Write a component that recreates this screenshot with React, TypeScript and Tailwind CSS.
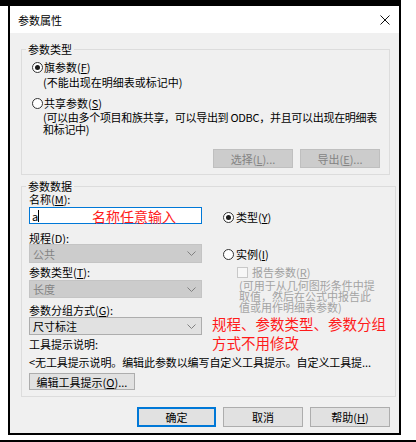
import type { ReactNode } from 'react';

const Radio = ({ checked }: { checked?: boolean }) => (
  <span className="flex h-[11px] w-[11px] shrink-0 items-center justify-center rounded-full border border-[#333333] bg-white">
    {checked && <span className="h-[5px] w-[5px] rounded-full bg-[#1a1a1a]" />}
  </span>
);

const K = ({ children }: { children: ReactNode }) => (
  <span className="underline underline-offset-[1px]">{children}</span>
);

const Chevron = () => (
  <svg width="9" height="5" viewBox="0 0 9 5" className="shrink-0">
    <path d="M0.5 0.5 L4.5 4.5 L8.5 0.5" fill="none" stroke="#808080" strokeWidth="1" />
  </svg>
);

const Select = ({ value, disabled, tall }: { value: string; disabled?: boolean; tall?: boolean }) => (
  <div
    className={`flex w-[173px] items-center justify-between border pl-[3px] pr-[5px] ${tall ? 'h-[19px]' : 'h-[18px]'} ${
      disabled ? 'border-[#c4c4c4] bg-[#cccccc] text-[#838383]' : 'border-[#adadad] bg-[#e1e1e1] text-black'
    }`}
  >
    <span>{value}</span>
    <Chevron />
  </div>
);

const Button = ({ children, className = '' }: { children: ReactNode; className?: string }) => (
  <div className={`flex items-center justify-center border ${className}`}>{children}</div>
);

const App = () => {
  return (
    <div className="h-[442px] w-[416px] overflow-hidden bg-white font-['Noto_Sans_CJK_SC','Microsoft_YaHei',sans-serif] text-[11px] leading-[12px] text-black">
      <div className="h-[6px] w-[401px] bg-black" />

      <div className="ml-[8px] flex w-[393px] flex-col border-x-2 border-b-2 border-black">
        {/* title bar */}
        <div className="flex h-[27px] items-center justify-between bg-white pl-[8px] pr-[9px]">
          <span>参数属性</span>
          <svg width="10" height="10" viewBox="0 0 10 10">
            <path d="M0.5 0.5 L9.5 9.5 M9.5 0.5 L0.5 9.5" stroke="#111" strokeWidth="1" />
          </svg>
        </div>

        <div className="flex h-[400px] flex-col bg-[#f0f0f0]">
          {/* 参数类型 */}
          <fieldset className="ml-[11px] mr-[9px] mt-[10px] border border-[#dcdcdc]">
            <legend className="ml-[4px] px-[2px] leading-[12px]">参数类型</legend>
            <div className="flex flex-col pb-[6px] pl-[10px] pr-[9px]">
              <div className="mt-[6px] flex h-[12px] items-center gap-[1px]">
                <Radio checked />
                <span>旗参数(<K>F</K>)</span>
              </div>
              <div className="mt-[3px] pl-[11px]">(不能出现在明细表或标记中)</div>
              <div className="mt-[9px] flex h-[12px] items-center gap-[1px]">
                <Radio />
                <span>共享参数(<K>S</K>)</span>
              </div>
              <div className="mt-[2px] whitespace-nowrap pl-[11px] tracking-[-0.3px]">
                (可以由多个项目和族共享，可以导出到 ODBC，并且可以出现在明细表
                <br />
                和标记中)
              </div>
              <div className="mt-[14px] flex justify-end gap-[7px]">
                <Button className="h-[19px] w-[80px] border-[#bfbfbf] bg-[#cccccc] text-[#838383]">
                  选择(<K>L</K>)...
                </Button>
                <Button className="h-[19px] w-[80px] border-[#bfbfbf] bg-[#cccccc] text-[#838383]">
                  导出(<K>E</K>)...
                </Button>
              </div>
            </div>
          </fieldset>

          {/* 参数数据 */}
          <fieldset className="ml-[11px] mr-[9px] mt-[5px] border border-[#dcdcdc]">
            <legend className="ml-[4px] px-[2px] leading-[12px]">参数数据</legend>
            <div className="flex flex-col pb-[6px] pl-[7px] pr-[9px]">
              <div className="flex">
                <div className="flex w-[173px] flex-col">
                  <div className="mt-[1px]">名称(<K>M</K>):</div>
                  <div className="relative mt-[2px] flex h-[17px] items-center border border-[#0078d7] bg-white pl-[2px]">
                    <span>a</span>
                    <span className="h-[12px] w-[1px] bg-black" />
                    <span className="absolute left-[62px] top-0 text-[14px] leading-[17px] text-[#ff1a1a]">
                      名称任意输入
                    </span>
                  </div>
                  <div className="mt-[8px]">规程(<K>D</K>):</div>
                  <Select value="公共" disabled tall />
                  <div className="mt-[3px]">参数类型(<K>T</K>):</div>
                  <div className="mt-[2px]">
                    <Select value="长度" disabled />
                  </div>
                  <div className="mt-[6px]">参数分组方式(<K>G</K>):</div>
                  <div className="mt-[1px]">
                    <Select value="尺寸标注" />
                  </div>
                  <div className="mt-[3px]">工具提示说明:</div>
                </div>

                <div className="ml-[21px] flex flex-col">
                  <div className="mt-[19px] flex h-[12px] items-center gap-[2px]">
                    <Radio checked />
                    <span>类型(<K>Y</K>)</span>
                  </div>
                  <div className="mt-[25px] flex h-[12px] items-center gap-[2px]">
                    <Radio />
                    <span>实例(<K>I</K>)</span>
                  </div>
                  <div className="mt-[6px] flex h-[12px] items-center gap-[4px] pl-[14px] text-[#a0a0a0]">
                    <span className="h-[11px] w-[11px] border border-[#c8c8c8] bg-[#f7f7f7]" />
                    <span>报告参数(<K>R</K>)</span>
                  </div>
                  <div className="mt-[2px] whitespace-nowrap pl-[16px] leading-[11px] text-[#a3a3a3]">
                    (可用于从几何图形条件中提
                    <br />
                    取值，然后在公式中报告此
                    <br />
                    值或用作明细表参数)
                  </div>
                  <div className="-mb-[2px] -ml-[11px] mt-[1px] whitespace-nowrap text-[14.5px] leading-[19px] text-[#ff1a1a]">
                    规程、参数类型、参数分组
                    <br />
                    方式不用修改
                  </div>
                </div>
              </div>

              <div className="mt-[6px] whitespace-nowrap tracking-[-0.1px]">
                &lt;无工具提示说明。编辑此参数以编写自定义工具提示。自定义工具提...
              </div>
              <Button className="mt-[5px] h-[17px] w-[106px] border-[#adadad] bg-[#e1e1e1]">
                编辑工具提示(<K>O</K>)...
              </Button>
            </div>
          </fieldset>

          {/* dialog buttons */}
          <div className="mt-[10px] flex justify-end gap-[7px] pr-[9px]">
            <Button className="h-[20px] w-[79px] border-2 border-[#0078d7] bg-[#e1e1e1]">确定</Button>
            <Button className="h-[20px] w-[80px] border-[#adadad] bg-[#e1e1e1]">取消</Button>
            <Button className="h-[20px] w-[80px] border-[#adadad] bg-[#e1e1e1]">
              帮助(<K>H</K>)
            </Button>
          </div>
        </div>
      </div>

      <div className="mt-[5px] h-[2px] w-full bg-black" />
    </div>
  );
};

export default App;
